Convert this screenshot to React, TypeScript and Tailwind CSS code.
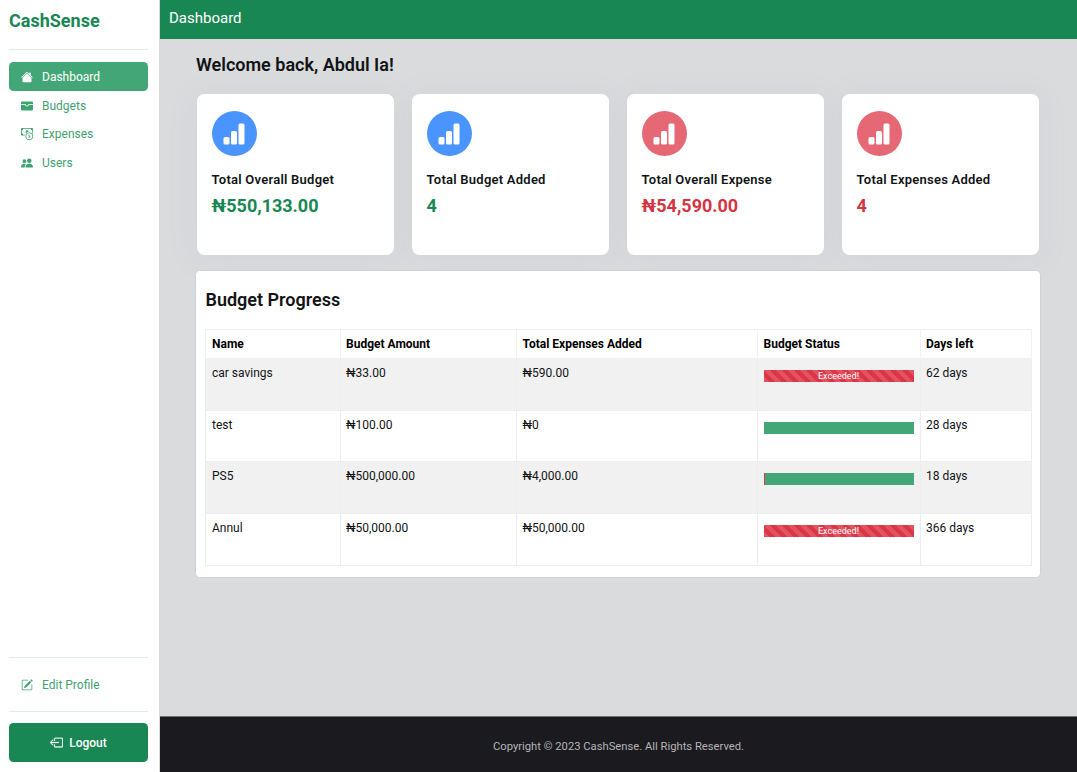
import React from "react";
import {
  BsHouseFill,
  BsWalletFill,
  BsCashCoin,
  BsPeopleFill,
  BsPencilSquare,
  BsBoxArrowLeft,
  BsBarChartFill,
} from "react-icons/bs";

const nav = [
  { label: "Dashboard", Icon: BsHouseFill, active: true },
  { label: "Budgets", Icon: BsWalletFill, active: false },
  { label: "Expenses", Icon: BsCashCoin, active: false },
  { label: "Users", Icon: BsPeopleFill, active: false },
];

const cards = [
  { title: "Total Overall Budget", value: "₦550,133.00", circle: "bg-[#4a94ff]", text: "text-[#198754]" },
  { title: "Total Budget Added", value: "4", circle: "bg-[#4a94ff]", text: "text-[#198754]" },
  { title: "Total Overall Expense", value: "₦54,590.00", circle: "bg-[#e56874]", text: "text-[#d33543]" },
  { title: "Total Expenses Added", value: "4", circle: "bg-[#e56874]", text: "text-[#d33543]" },
];

const rows = [
  { name: "car savings", amount: "₦33.00", spent: "₦590.00", used: 100, days: "62 days" },
  { name: "test", amount: "₦100.00", spent: "₦0", used: 0, days: "28 days" },
  { name: "PS5", amount: "₦500,000.00", spent: "₦4,000.00", used: 0.8, days: "18 days" },
  { name: "Annul", amount: "₦50,000.00", spent: "₦50,000.00", used: 100, days: "366 days" },
];

const stripes =
  "bg-[linear-gradient(45deg,rgba(255,255,255,0.15)_25%,transparent_25%,transparent_50%,rgba(255,255,255,0.15)_50%,rgba(255,255,255,0.15)_75%,transparent_75%,transparent)] bg-[length:12px_12px]";

function Status({ used }: { used: number }) {
  return (
    <div className="mt-[6px] flex h-[12px] w-[150px] overflow-hidden bg-[#43a677]">
      <div
        className={`flex items-center justify-center overflow-hidden bg-[#dc3545] text-[9px] leading-none text-white ${used >= 100 ? stripes : ""}`}
        style={{ width: `${used}%` }}
      >
        {used >= 100 ? "Exceeded!" : ""}
      </div>
    </div>
  );
}

export default function App() {
  return (
    <div className="flex h-[772px] w-[1077px] overflow-hidden bg-white font-['Roboto','Liberation_Sans',sans-serif] text-[12px] leading-[18px] text-[#111315]">
      <aside className="flex w-[160px] shrink-0 flex-col border-r border-[#d5dbd9] pr-[11px] pl-[9px]">
        <div className="flex h-[49px] items-start pt-[10px] text-[18px] leading-[22px] font-bold text-[#198754]">CashSense</div>
        <hr className="border-[#e3ebe9]" />
        <nav className="mt-[12px] flex flex-col">
          {nav.map(({ label, Icon, active }) => (
            <a
              key={label}
              className={`flex h-[28.7px] items-center gap-[9px] rounded-[4.5px] pt-px pl-[12px] ${active ? "bg-[#43a677] text-white" : "text-[#3fa272]"}`}
            >
              <Icon className="size-[12px]" />
              {label}
            </a>
          ))}
        </nav>
        <div className="mt-auto flex flex-col">
          <hr className="border-[#e3ebe9]" />
          <a className="flex h-[53px] items-center gap-[9px] pl-[12px] text-[#3fa272]">
            <BsPencilSquare className="size-[12px]" />
            Edit Profile
          </a>
          <hr className="border-[#e3ebe9]" />
          <button className="mt-[11px] mb-[10px] flex h-[39px] items-center justify-center gap-[6px] rounded-[4.5px] bg-[#198754] font-medium text-white">
            <BsBoxArrowLeft className="size-[13px] stroke-current stroke-[0.3px]" />
            Logout
          </button>
        </div>
      </aside>
      <div className="flex min-w-0 flex-1 flex-col">
        <header className="flex h-[39px] shrink-0 items-center bg-[#198754] pb-[3px] pl-[9px] text-[15px] text-white">Dashboard</header>
        <main className="flex-1 bg-[#dadbdd] pt-[15px] pr-[37px] pl-[36px]">
          <h1 className="text-[18px] leading-[22px] font-semibold">Welcome back, Abdul Ia!</h1>
          <div className="mt-[18px] mr-px ml-px grid grid-cols-4 gap-[18px]">
            {cards.map((c) => (
              <div key={c.title} className="rounded-[7.5px] shadow-[0_4px_30px_rgba(140,152,164,0.1)]">
                <section className="relative h-[161px] rounded-[7.5px] bg-white px-[14.6px] pt-[17px]">
                  <div className={`flex size-[45px] items-center justify-center rounded-full pr-[1px] text-white ${c.circle}`}>
                    <BsBarChartFill className="size-[24px]" />
                  </div>
                  <h2 className="mt-[15px] text-[13px] leading-[18px] font-semibold tracking-[0.24px]">{c.title}</h2>
                  <p className={`mt-[6px] text-[18px] leading-[22px] font-bold ${c.text}`}>{c.value}</p>
                </section>
              </div>
            ))}
          </div>
          <section className="relative mt-[15px] -mr-px -ml-[0.6px] h-[308px] rounded-[4.5px] border border-[#cfd1d4] bg-white pr-[8px] pl-[8.6px] pt-[18px]">
            <h2 className="pl-[0.5px] text-[18px] leading-[22px] font-semibold">Budget Progress</h2>
            <table className="mt-[18px] w-[826px] table-fixed border-collapse text-left">
              <colgroup>
                <col className="w-[134.5px]" />
                <col className="w-[176.5px]" />
                <col className="w-[241px]" />
                <col className="w-[162.5px]" />
                <col className="w-[111.5px]" />
              </colgroup>
              <thead>
                <tr className="h-[29px]">
                  {["Name", "Budget Amount", "Total Expenses Added", "Budget Status", "Days left"].map((h) => (
                    <th key={h} className="border border-[#eff2f4] px-[5.5px] py-0 font-bold text-black first:pl-[6px]">{h}</th>
                  ))}
                </tr>
              </thead>
              <tbody className="align-top">
                {rows.map((r) => (
                  <tr key={r.name} className="h-[51.7px] odd:bg-[#f1f1f1] [&>td]:border [&>td]:border-[#ebeeef] [&>td]:px-[5.5px] [&>td]:pt-[5px] [&>td:first-child]:pl-[6px]">
                    <td>{r.name}</td>
                    <td>{r.amount}</td>
                    <td>{r.spent}</td>
                    <td><Status used={r.used} /></td>
                    <td>{r.days}</td>
                  </tr>
                ))}
              </tbody>
            </table>
          </section>
        </main>
        <footer className="flex h-[56px] shrink-0 items-center justify-center border-t border-[#6b7270] bg-[#1b1a1f] pt-[4px] text-[11.23px] text-[#b4b5b7]">
          Copyright © 2023 CashSense. All Rights Reserved.
        </footer>
      </div>
    </div>
  );
}
